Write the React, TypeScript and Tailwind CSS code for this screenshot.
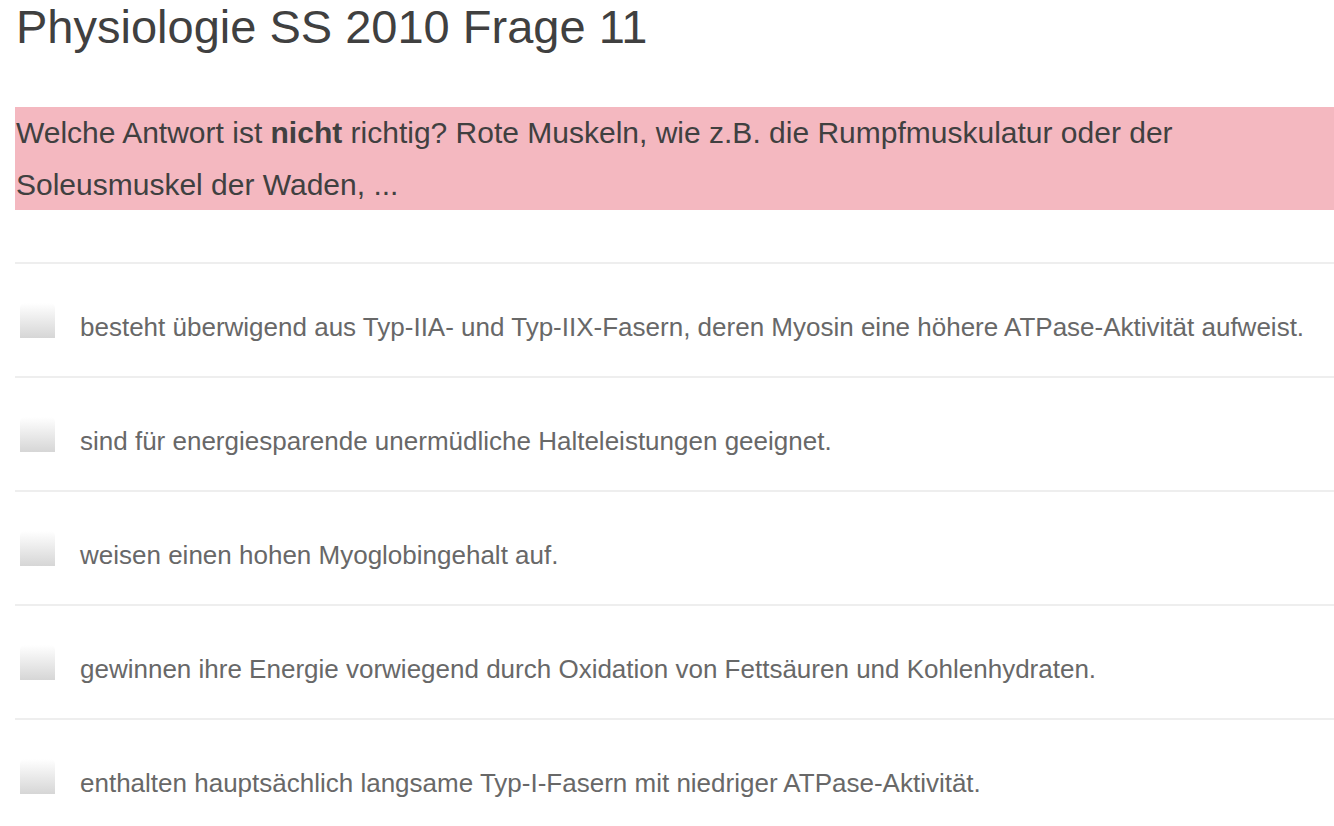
import React from "react";

const answers = [
  "besteht überwigend aus Typ-IIA- und Typ-IIX-Fasern, deren Myosin eine höhere ATPase-Aktivität aufweist.",
  "sind für energiesparende unermüdliche Halteleistungen geeignet.",
  "weisen einen hohen Myoglobingehalt auf.",
  "gewinnen ihre Energie vorwiegend durch Oxidation von Fettsäuren und Kohlenhydraten.",
  "enthalten hauptsächlich langsame Typ-I-Fasern mit niedriger ATPase-Aktivität.",
];

export default function App() {
  return (
    <div className="h-[826px] w-[1334px] overflow-hidden bg-white pl-[15px] font-['Liberation_Sans',Arial,sans-serif]">
      <h1 className="pl-[1px] text-[47px] leading-[54px] font-normal text-[#404040]">
        Physiologie SS 2010 Frage 11
      </h1>
      <div className="mt-[53px] h-[103px] bg-[#f4b8c0] pl-[1px] pr-[100px] text-[30px] leading-[52px] text-[#404040]">
        Welche Antwort ist <b className="font-bold">nicht</b> richtig? Rote Muskeln, wie z.B. die Rumpfmuskulatur oder der Soleusmuskel der Waden, ...
      </div>
      <div className="mt-[52px]">
        {answers.map((a) => (
          <div key={a} className="flex h-[114px] items-center border-t-2 border-[#eeeeee]">
            <div className="ml-[5px] h-[35px] w-[35px] shrink-0 rounded-t-[5px] bg-gradient-to-b from-[#ffffff] to-[#d6d6d6]" />
            <span className="ml-[25px] mt-[13px] text-[26px] leading-[32px] text-[#686868]">{a}</span>
          </div>
        ))}
      </div>
    </div>
  );
}
